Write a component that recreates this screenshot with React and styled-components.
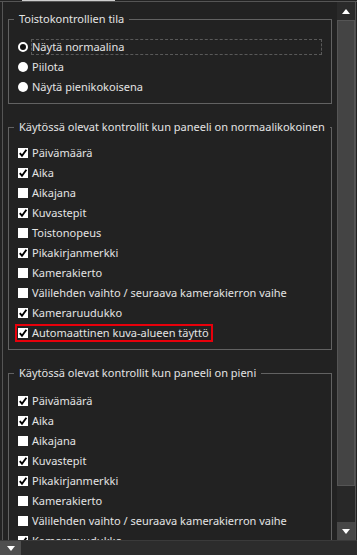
import React from 'react'
import styled, { createGlobalStyle } from 'styled-components'

const GlobalStyle = createGlobalStyle`
  html, body { margin: 0; padding: 0; background: #222; }
  body { font-family: "Noto Sans", "Open Sans", sans-serif; }
`

const groups = [
  {
    title: 'Käytössä olevat kontrollit kun paneeli on normaalikokoinen',
    top: 8,
    items: [
      ['Päivämäärä', true],
      ['Aika', true],
      ['Aikajana', false],
      ['Kuvastepit', true],
      ['Toistonopeus', false],
      ['Pikakirjanmerkki', true],
      ['Kamerakierto', false],
      ['Välilehden vaihto / seuraava kamerakierron vaihe', false],
      ['Kameraruudukko', true],
      ['Automaattinen kuva-alueen täyttö', true, true],
    ],
  },
  {
    title: 'Käytössä olevat kontrollit kun paneeli on pieni',
    top: 10,
    items: [
      ['Päivämäärä', true],
      ['Aika', true],
      ['Aikajana', false],
      ['Kuvastepit', true],
      ['Pikakirjanmerkki', true],
      ['Kamerakierto', false],
      ['Välilehden vaihto / seuraava kamerakierron vaihe', false],
      ['Kameraruudukko', true],
    ],
  },
]

function Radio({ checked }) {
  return (
    <Indicator viewBox="0 0 10 10">
      {checked
        ? <circle cx="5" cy="5" r="4" fill="#111" stroke="#fff" strokeWidth="2" />
        : <circle cx="5" cy="5" r="5" fill="#fff" />}
    </Indicator>
  )
}

function Check({ checked }) {
  return (
    <Indicator viewBox="0 0 10 10">
      <rect width="10" height="10" fill="#fff" />
      {checked && <path d="M1.8 5.2 L4 7.8 L8.4 1.8" fill="none" stroke="#000" strokeWidth="1.9" />}
    </Indicator>
  )
}

function App() {
  return (
    <Page>
      <GlobalStyle />
      <TopStrip><TabEdge /></TopStrip>
      <Frame>
        <Body>
          <Content>
            <Group $top={10}>
              <Legend>Toistokontrollien tila</Legend>
              <Row><Radio checked /><Label $focus>Näytä normaalina</Label></Row>
              <Row><Radio /><Label>Piilota</Label></Row>
              <Row><Radio /><Label>Näytä pienikokoisena</Label></Row>
            </Group>
            {groups.map((g) => (
              <Group key={g.title} $top={g.top}>
                <Legend>{g.title}</Legend>
                {g.items.map(([text, checked, marked]) => (
                  <Row key={text} $marked={marked}>
                    <Check checked={checked} />
                    <Label>{text}</Label>
                  </Row>
                ))}
              </Group>
            ))}
          </Content>
          <ScrollBar>
            <ScrollButton>
              <svg width="8" height="5" viewBox="0 0 8 5"><polygon points="0,5 4,0 8,5" fill="#fff" /></svg>
            </ScrollButton>
            <Thumb />
            <Track />
            <ScrollButton $light>
              <svg width="8" height="5" viewBox="0 0 8 5"><polygon points="0,0 8,0 4,5" fill="#fff" /></svg>
            </ScrollButton>
          </ScrollBar>
        </Body>
      </Frame>
      <Footer>
        <FooterButton>
          <svg width="8" height="5" viewBox="0 0 8 5"><polygon points="0,0 8,0 4,5" fill="#fff" /></svg>
        </FooterButton>
      </Footer>
    </Page>
  )
}

export default App

const Page = styled.div`
  width: 357px;
  height: 555px;
  background: #222;
  display: flex;
  flex-direction: column;
  overflow: hidden;
`
const TopStrip = styled.div`
  height: 1px;
  display: flex;
`
const TabEdge = styled.div`
  margin-left: 22px;
  width: 93px;
  background: #cfcfcf;
`
const Frame = styled.div`
  border-top: 1px solid #555;
  height: 538px;
  display: flex;
`
const Body = styled.div`
  flex: 1;
  margin-left: 2px;
  margin-right: 1px;
  border-left: 1px solid #555;
  display: flex;
  min-width: 0;
`
const Content = styled.div`
  flex: 1;
  overflow: hidden;
  padding: 0 5px;
  display: flex;
  flex-direction: column;
  gap: 15px;
  color: #e4e4e4;
  font-size: 11px;
`
const Group = styled.fieldset`
  margin: 0;
  padding: ${(p) => p.$top}px 0 6px;
  border: 1px solid #626262;
  flex-shrink: 0;
  &:first-child { margin-top: 9px; }
`
const Legend = styled.legend`
  margin-left: 5px;
  padding: 0 5px;
  line-height: 16px;
  white-space: nowrap;
`
const Row = styled.div`
  display: flex;
  align-items: center;
  gap: 4px;
  height: 20px;
  padding-left: 9px;
  white-space: nowrap;
  ${(p) => p.$marked && `
    width: fit-content;
    height: 14px;
    margin: 1px 0 1px 6px;
    padding: 0 2px 0 1px;
    border: 2px solid #e8000b;
  `}
`
const Indicator = styled.svg`
  width: 10px;
  height: 10px;
  flex-shrink: 0;
`
const Label = styled.span`
  line-height: 14px;
  ${(p) => p.$focus && `
    flex: 1;
    margin-right: 10px;
    outline: 1px dashed #595959;
  `}
`
const ScrollBar = styled.div`
  width: 18px;
  border-right: 1px solid #505050;
  display: flex;
  flex-direction: column;
`
const ScrollButton = styled.div`
  height: 18px;
  flex-shrink: 0;
  display: flex;
  align-items: center;
  justify-content: center;
  background: ${(p) => (p.$light ? '#474747' : '#2a2a2a')};
`
const Thumb = styled.div`
  height: 464px;
  background: #444;
  border: 1px solid #555;
`
const Track = styled.div`
  flex: 1;
  background: #282828;
`
const Footer = styled.div`
  flex: 1;
  background: #2c2c2c;
  border-top: 1px solid #3a3a3a;
  display: flex;
`
const FooterButton = styled.div`
  width: 21px;
  background: #4f4f4f;
  display: flex;
  align-items: center;
  justify-content: center;
`
